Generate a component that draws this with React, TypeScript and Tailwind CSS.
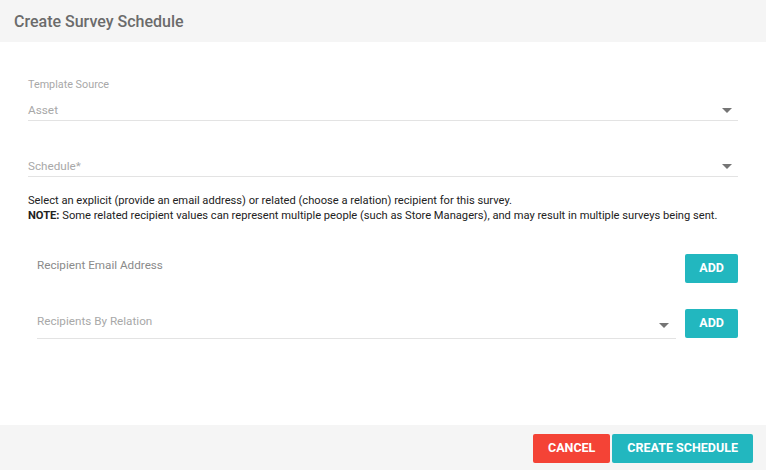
import React from "react";

function Caret() {
  return (
    <span className="block h-0 w-0 border-x-[5px] border-t-[5px] border-x-transparent border-t-[#757575]" />
  );
}

function AddButton() {
  return (
    <button className="h-[29px] shrink-0 rounded-[2px] bg-[#22b7bf] px-[14px] text-[12.5px] font-bold text-white">
      ADD
    </button>
  );
}

export default function App() {
  return (
    <div
      className="flex h-[470px] w-[766px] flex-col bg-white"
      style={{ fontFamily: "Roboto, 'Liberation Sans', sans-serif" }}
    >
      {/* Header */}
      <div className="flex h-[42px] shrink-0 items-center bg-[#f5f5f5] px-[14px] pt-[1px]">
        <h1 className="text-[16px] font-medium text-[#6b6b6b]">Create Survey Schedule</h1>
      </div>

      {/* Body */}
      <div className="flex-1 px-[28px] pt-[35px]">
        <div className="text-[10.8px] leading-[16px] text-[#a8a8a8]">Template Source</div>
        <div className="flex items-center justify-between border-b border-[#e3e3e3] pr-[6px] pt-[7px]">
          <span className="text-[11.8px] leading-[20px] text-[#a8a8a8]">Asset</span>
          <Caret />
        </div>

        <div className="mt-[36px] flex items-center justify-between border-b border-[#e3e3e3] pr-[6px]">
          <span className="text-[11.7px] leading-[19px] text-[#a8a8a8]">Schedule*</span>
          <Caret />
        </div>

        <p className="mt-[16px] text-[11.15px] leading-[15px] text-[#222]">
          Select an explicit (provide an email address) or related (choose a relation) recipient for this survey.
          <br />
          <span className="font-bold">NOTE:</span> Some related recipient values can represent multiple people (such
          as Store Managers), and may result in multiple surveys being sent.
        </p>

        <div className="mt-[31px] flex items-start justify-between pl-[9px]">
          <span className="pt-[1px] text-[11.7px] leading-[20px] text-[#8a8a8a]">Recipient Email Address</span>
          <AddButton />
        </div>

        <div className="mt-[26px] flex items-start gap-[9px] pl-[9px]">
          <div className="box-border flex h-[30px] flex-1 items-start justify-between border-b border-[#e3e3e3] pr-[7px] pt-[2px]">
            <span className="text-[11.7px] leading-[20px] text-[#a8a8a8]">Recipients By Relation</span>
            <span className="pt-[12px]">
              <Caret />
            </span>
          </div>
          <AddButton />
        </div>
      </div>

      {/* Footer */}
      <div className="flex h-[45px] shrink-0 items-start justify-end gap-[2px] bg-[#f5f5f5] pr-[13px] pt-[9px]">
        <button className="h-[29px] rounded-[2px] bg-[#f44336] px-[15px] text-[12.5px] font-bold text-white">
          CANCEL
        </button>
        <button className="h-[29px] rounded-[2px] bg-[#22b7bf] px-[15px] text-[12.5px] font-bold text-white">
          CREATE SCHEDULE
        </button>
      </div>
    </div>
  );
}
